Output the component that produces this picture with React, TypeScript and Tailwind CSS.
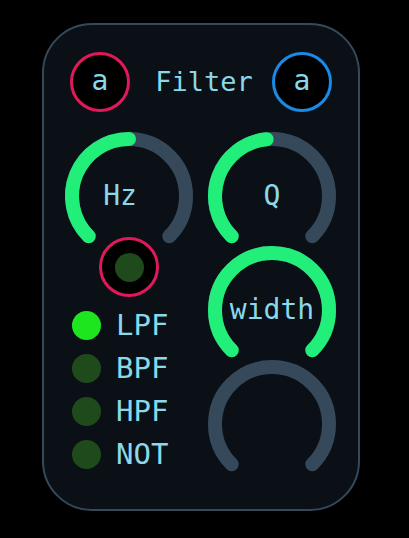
import React from "react";

const GREEN = "#22ee7a";
const TRACK = "#35495b";

function point(cx: number, cy: number, r: number, deg: number) {
  const rad = (deg * Math.PI) / 180;
  return [cx + r * Math.sin(rad), cy - r * Math.cos(rad)];
}

function arc(from: number, to: number) {
  const [x1, y1] = point(64, 64, 57, from);
  const [x2, y2] = point(64, 64, 57, to);
  const large = to - from > 180 ? 1 : 0;
  return `M ${x1} ${y1} A 57 57 0 ${large} 1 ${x2} ${y2}`;
}

function Knob({ label, value, shift = false }: { label?: string; value: number; shift?: boolean }) {
  const end = -135 + 270 * value;
  return (
    <div className="relative w-[128px] h-[105px] flex items-center justify-center">
      <svg
        width="128"
        height="105"
        viewBox="0 0 128 105"
        className="absolute left-0 top-0 overflow-visible"
      >
        <path d={arc(-135, 135)} fill="none" stroke={TRACK} strokeWidth="14" strokeLinecap="round" />
        {value > 0 && (
          <path d={arc(-135, end)} fill="none" stroke={GREEN} strokeWidth="14" strokeLinecap="round" />
        )}
      </svg>
      {label && (
        <span
          className={`relative mt-[22px] text-[28px] leading-none text-[#8ad8ea] ${
            shift ? "mr-[18px]" : ""
          }`}
        >
          {label}
        </span>
      )}
    </div>
  );
}

function Jack({ color }: { color: string }) {
  return (
    <div
      className="w-[60px] h-[60px] rounded-full border-[3px] bg-black flex items-center justify-center text-[28px] leading-none text-[#8ad8ea] pb-[3px]"
      style={{ borderColor: color }}
    >
      a
    </div>
  );
}

const modes = [
  { name: "LPF", on: true },
  { name: "BPF", on: false },
  { name: "HPF", on: false },
  { name: "NOT", on: false },
];

export default function App() {
  return (
    <div
      className="w-[409px] h-[538px] bg-black pl-[42px] pt-[23px]"
      style={{ fontFamily: '"DejaVu Sans Mono", monospace' }}
    >
      <div className="w-[318px] h-[488px] rounded-[50px] border-2 border-[#34495a] bg-[#0b1016] flex flex-col">
        {/* Header */}
        <div className="flex items-center justify-between px-[26px] pt-[27px]">
          <Jack color="#e0195a" />
          <span className="text-[27px] leading-none text-[#8ad8ea] pl-[6px] pb-[2px]">Filter</span>
          <Jack color="#1a8ae6" />
        </div>

        {/* Controls */}
        <div className="flex gap-[15px] pl-[21px] pt-[20px]">
          <div className="flex flex-col">
            <Knob label="Hz" value={0.5} shift />
            <div className="self-center w-[60px] h-[60px] rounded-full border-[3px] border-[#e0195a] bg-black flex items-center justify-center">
              <div className="w-[29px] h-[29px] rounded-full bg-[#1f4a1c]" />
            </div>
            <div className="flex flex-col gap-[14px] pl-[7px] pt-[14px]">
              {modes.map((m) => (
                <div key={m.name} className="flex items-center gap-[15px] h-[29px]">
                  <div
                    className={`w-[29px] h-[29px] rounded-full ${
                      m.on ? "bg-[#1ee61e]" : "bg-[#1f4a1c]"
                    }`}
                  />
                  <span className="text-[29px] leading-none text-[#8ad8ea]">{m.name}</span>
                </div>
              ))}
            </div>
          </div>
          <div className="flex flex-col gap-[9px]">
            <Knob label="Q" value={0.48} />
            <Knob label="width" value={1} />
            <Knob value={0} />
          </div>
        </div>
      </div>
    </div>
  );
}
